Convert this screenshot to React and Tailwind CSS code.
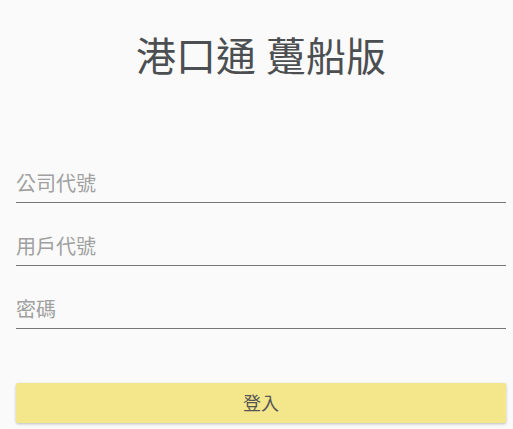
import React, { useState } from "react";

const font = { fontFamily: '"Roboto", "Noto Sans CJK TC", sans-serif' };

function Field({ placeholder, type = "text" }) {
  const [value, setValue] = useState("");
  return (
    <div className="border-b border-[#757575]">
      <input
        type={type}
        value={value}
        onChange={(e) => setValue(e.target.value)}
        placeholder={placeholder}
        className="w-full h-[36px] bg-transparent outline-none text-[20px] text-[#333] placeholder:text-[#a0a0a0] px-0"
        style={font}
      />
    </div>
  );
}

function App() {
  return (
    <div className="w-[513px] h-[429px] bg-[#fafafa] overflow-hidden pl-4 pr-[7px]" style={font}>
      <h1 className="pt-[32px] text-center text-[40px] leading-[52px] text-[#4c4f51]">
        港口通 躉船版
      </h1>
      <form className="pt-[82px] flex flex-col gap-[26px]">
        <Field placeholder="公司代號" />
        <Field placeholder="用戶代號" />
        <Field placeholder="密碼" type="password" />
      </form>
      <div className="pt-[54px]">
        <button
          className="w-full h-[40px] bg-[#f4e78b] rounded-[2px] shadow-[0_1px_3px_rgba(0,0,0,0.25)] text-[18px] text-[#555]"
          style={font}
        >
          登入
        </button>
      </div>
    </div>
  );
}

export default App;
